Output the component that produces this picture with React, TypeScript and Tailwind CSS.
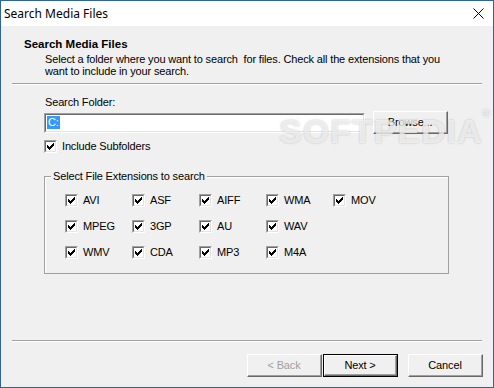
import React from "react";

const CHECK_PIXELS: [number, number][] = [
  [6, 0],
  [5, 1], [6, 1],
  [0, 2], [4, 2], [5, 2], [6, 2],
  [0, 3], [1, 3], [3, 3], [4, 3], [5, 3],
  [0, 4], [1, 4], [2, 4], [3, 4], [4, 4],
  [1, 5], [2, 5], [3, 5],
  [2, 6],
];

function CheckBox() {
  return (
    <div className="w-[13px] h-[13px] border-t border-l border-b border-r border-t-[#a0a0a0] border-l-[#a0a0a0] border-b-white border-r-white shrink-0">
      <div className="w-full h-full border-t border-l border-b border-r border-t-[#696969] border-l-[#696969] border-b-[#e3e3e3] border-r-[#e3e3e3] bg-white flex items-center justify-center">
        <svg width="7" height="7" viewBox="0 0 7 7" shapeRendering="crispEdges">
          {CHECK_PIXELS.map(([x, y]) => (
            <rect key={`${x}-${y}`} x={x} y={y} width="1" height="1" fill="#000" />
          ))}
        </svg>
      </div>
    </div>
  );
}

function Ext({ label }: { label: string }) {
  return (
    <div className="w-[67px] h-[13px] flex items-center gap-[5px]">
      <CheckBox />
      <span className="leading-[13px]">{label}</span>
    </div>
  );
}

function Button({
  children,
  disabled,
  isDefault,
  className,
}: {
  children: React.ReactNode;
  disabled?: boolean;
  isDefault?: boolean;
  className?: string;
}) {
  const inner = (
    <div className="w-full h-full border-t border-l border-b border-r border-t-white border-l-white border-b-[#696969] border-r-[#696969]">
      <div
        className={`w-full h-full border-b border-r border-b-[#a0a0a0] border-r-[#a0a0a0] bg-[#f0f0f0] flex items-center justify-center ${
          disabled ? "text-[#a0a0a0]" : "text-black"
        }`}
      >
        {children}
      </div>
    </div>
  );
  return (
    <div className={`w-[75px] h-[23px] ${isDefault ? "border border-[#000]" : ""} ${className ?? ""}`}>
      {inner}
    </div>
  );
}

export default function App() {
  const rows = [
    ["AVI", "ASF", "AIFF", "WMA", "MOV"],
    ["MPEG", "3GP", "AU", "WAV"],
    ["WMV", "CDA", "MP3", "M4A"],
  ];
  return (
    <div
      className="w-[494px] h-[388px] border border-[#2b64a0] bg-[#f0f0f0] flex flex-col relative overflow-hidden text-[11px] tracking-[-0.15px] text-black"
      style={{ fontFamily: '"Liberation Sans", Arial, sans-serif' }}
    >
      {/* Title bar */}
      <div className="h-[25px] bg-white flex items-center justify-between pl-[3px] pr-[9px] shrink-0">
        <span className="text-[12px] tracking-normal" style={{ fontFamily: '"Noto Sans", "Open Sans", sans-serif' }}>
          Search Media Files
        </span>
        <svg width="11" height="11" viewBox="0 0 11 11">
          <path d="M0.5 0.5 L10.5 10.5 M10.5 0.5 L0.5 10.5" stroke="#000" strokeWidth="1" />
        </svg>
      </div>

      {/* Header */}
      <div className="pl-[23px] pt-[11px]">
        <div className="font-bold text-[11.5px] leading-[14px] tracking-normal">Search Media Files</div>
        <div className="pl-[21px] leading-[12px] mt-[2px] whitespace-pre">
          {"Select a folder where you want to search  for files. Check all the extensions that you\nwant to include in your search."}
        </div>
      </div>
      <div className="mx-[11px] mt-[6px] h-[2px] border-t border-t-[#a0a0a0] border-b border-b-white" />

      {/* Body */}
      <div className="pl-[43px] pr-[45px] pt-[11px]">
        <div className="leading-[13px] pl-[1px]">Search Folder:</div>
        <div className="flex items-center mt-[2px] gap-[8px]">
          <div className="w-[322px] h-[20px] border-t border-l border-b border-r border-t-[#a0a0a0] border-l-[#a0a0a0] border-b-white border-r-white">
            <div className="w-full h-full border-t border-l border-b border-r border-t-[#696969] border-l-[#696969] border-b-[#e3e3e3] border-r-[#e3e3e3] bg-white flex items-center pl-[1px]">
              <span className="bg-[#3399ff] text-white leading-[13px] px-[1px]">C:</span>
            </div>
          </div>
          <Button>Browse...</Button>
        </div>
        <div className="flex items-center gap-[5px] mt-[6px]">
          <CheckBox />
          <span className="leading-[13px]">Include Subfolders</span>
        </div>

        {/* Group box */}
        <div className="relative mt-[23px] w-[405px] h-[98px] border border-[#a0a0a0] shadow-[inset_1px_1px_0_#ffffff]">
          <span className="absolute -top-[7px] left-[6px] bg-[#f0f0f0] px-[2px] leading-[13px]">
            Select File Extensions to search
          </span>
          <div className="pl-[20px] pt-[17px] flex flex-col gap-[13px]">
            {rows.map((r, i) => (
              <div key={i} className="flex">
                {r.map((l) => (
                  <Ext key={l} label={l} />
                ))}
              </div>
            ))}
          </div>
        </div>
      </div>

      <div className="flex-1" />
      <div className="mx-[11px] h-[2px] border-t border-t-[#a0a0a0] border-b border-b-white" />
      <div className="flex justify-end pr-[10px] pt-[12px] pb-[10px]">
        <Button disabled>&lt; Back</Button>
        <Button isDefault className="ml-[1px]">Next &gt;</Button>
        <Button className="ml-[10px]">Cancel</Button>
      </div>

      {/* Watermark */}
      <div
        className="absolute left-[278px] top-[105px] text-[34px] font-bold tracking-[1px] text-white/70 pointer-events-none select-none"
        style={{ textShadow: "0 0 2px rgba(110,110,110,0.45)" }}
      >
        SOFTPEDIA<span className="text-[10px] align-top">®</span>
      </div>
    </div>
  );
}
